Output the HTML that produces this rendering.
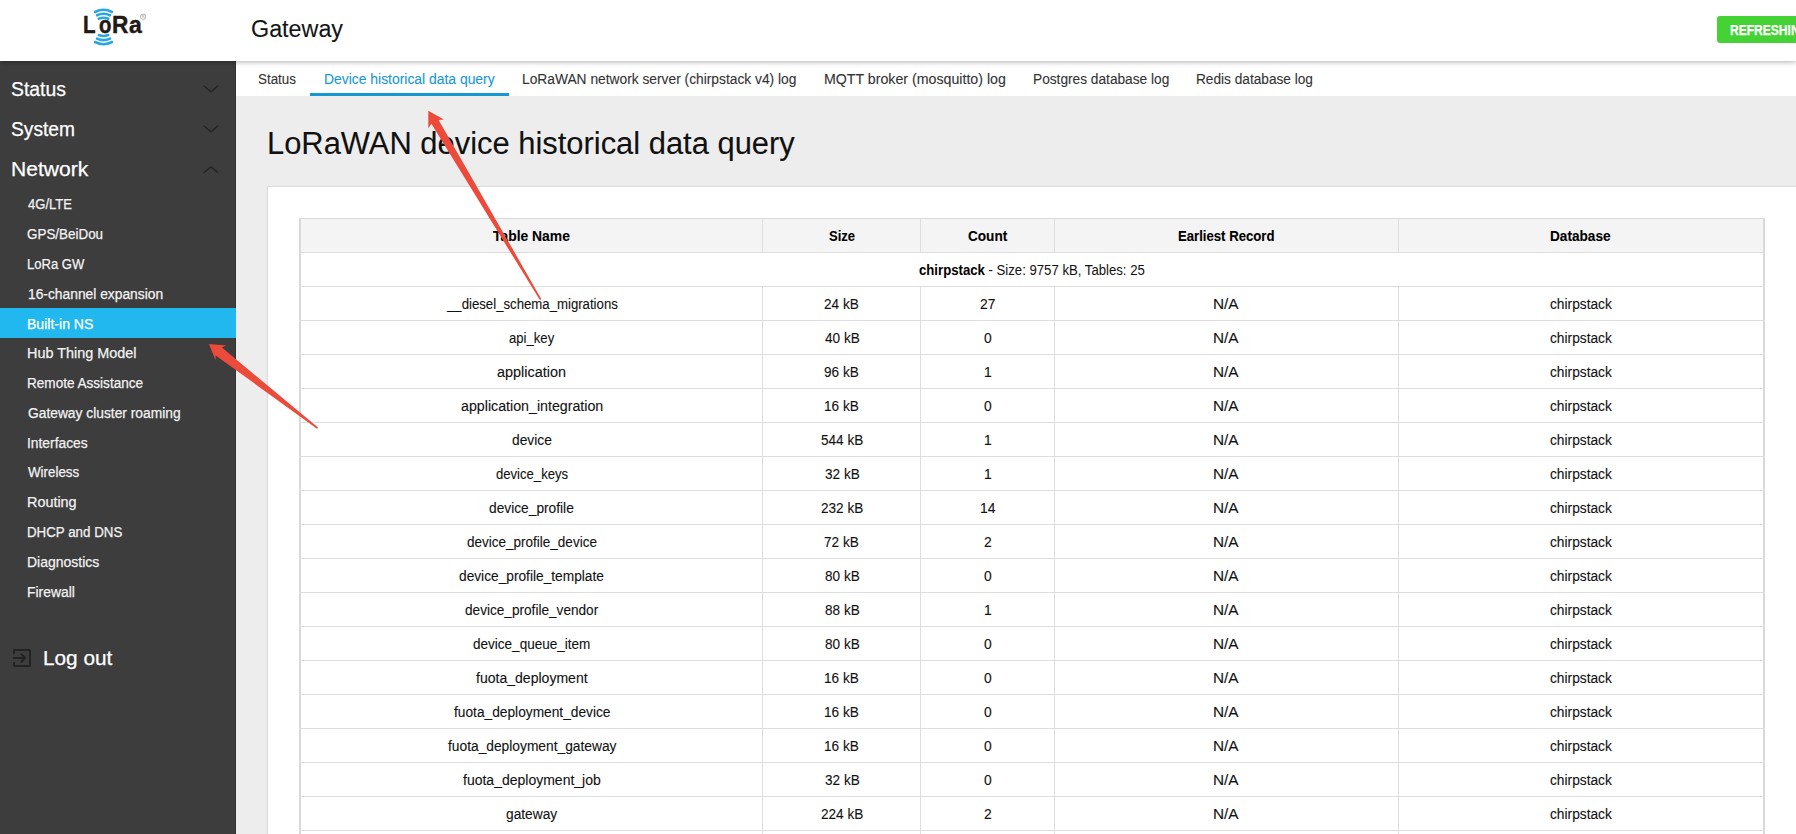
<!DOCTYPE html>
<html><head><meta charset='utf-8'><style>
*{margin:0;padding:0;box-sizing:border-box}
html,body{width:1796px;height:834px;overflow:hidden;background:#ededed;font-family:"Liberation Sans", sans-serif}
.t{position:absolute;white-space:pre;transform-origin:0 0;font-family:"Liberation Sans", sans-serif}
.s{-webkit-text-stroke:0.25px currentColor}
.s1{-webkit-text-stroke:0.1px currentColor}
.abs{position:absolute}
</style></head><body>
<div class=abs style='left:268px;top:187px;width:1600px;height:700px;background:#fff;box-shadow:0 0 1px 1px #dcdcdc'></div><div class=abs style='left:299px;top:218px;width:1466px;height:34px;background:#f4f4f4'></div><div class=abs style='left:299px;top:218px;width:2px;height:700px;background:#d9d9d9'></div><div class=abs style='left:1763px;top:218px;width:2px;height:700px;background:#d9d9d9'></div><div class=abs style='left:299px;top:218px;width:1466px;height:1px;background:#d9d9d9'></div><div class=abs style='left:299px;top:252px;width:1466px;height:1px;background:#dedede'></div><div class=abs style='left:299px;top:286px;width:1466px;height:1px;background:#dedede'></div><div class=abs style='left:299px;top:320px;width:1466px;height:1px;background:#dedede'></div><div class=abs style='left:299px;top:354px;width:1466px;height:1px;background:#dedede'></div><div class=abs style='left:299px;top:388px;width:1466px;height:1px;background:#dedede'></div><div class=abs style='left:299px;top:422px;width:1466px;height:1px;background:#dedede'></div><div class=abs style='left:299px;top:456px;width:1466px;height:1px;background:#dedede'></div><div class=abs style='left:299px;top:490px;width:1466px;height:1px;background:#dedede'></div><div class=abs style='left:299px;top:524px;width:1466px;height:1px;background:#dedede'></div><div class=abs style='left:299px;top:558px;width:1466px;height:1px;background:#dedede'></div><div class=abs style='left:299px;top:592px;width:1466px;height:1px;background:#dedede'></div><div class=abs style='left:299px;top:626px;width:1466px;height:1px;background:#dedede'></div><div class=abs style='left:299px;top:660px;width:1466px;height:1px;background:#dedede'></div><div class=abs style='left:299px;top:694px;width:1466px;height:1px;background:#dedede'></div><div class=abs style='left:299px;top:728px;width:1466px;height:1px;background:#dedede'></div><div class=abs style='left:299px;top:762px;width:1466px;height:1px;background:#dedede'></div><div class=abs style='left:299px;top:796px;width:1466px;height:1px;background:#dedede'></div><div class=abs style='left:299px;top:830px;width:1466px;height:1px;background:#dedede'></div><div class=abs style='left:762px;top:218px;width:1px;height:34px;background:#dedede'></div><div class=abs style='left:762px;top:286px;width:1px;height:600px;background:#dedede'></div><div class=abs style='left:920px;top:218px;width:1px;height:34px;background:#dedede'></div><div class=abs style='left:920px;top:286px;width:1px;height:600px;background:#dedede'></div><div class=abs style='left:1054px;top:218px;width:1px;height:34px;background:#dedede'></div><div class=abs style='left:1054px;top:286px;width:1px;height:600px;background:#dedede'></div><div class=abs style='left:1398px;top:218px;width:1px;height:34px;background:#dedede'></div><div class=abs style='left:1398px;top:286px;width:1px;height:600px;background:#dedede'></div><div class=t style='left:919.03px;top:263px;font-size:14px;line-height:14px;color:#111;transform:scaleX(0.9400)'><b style='color:#000'>chirpstack</b> - Size: 9757 kB, Tables: 25</div>
<div style='position:absolute;left:0;top:0;z-index:2'>
<div class='t s1' style='left:83.42px;top:13px;font-size:24px;line-height:24px;color:#231815;font-weight:bold;transform:scaleX(0.8560);-webkit-text-stroke:0.45px #231815;'>L</div><div class='t s1' style='left:98.55px;top:13px;font-size:24px;line-height:24px;color:#231815;font-weight:bold;transform:scaleX(0.8471);-webkit-text-stroke:0.45px #231815;'>o</div><div class='t s1' style='left:111.98px;top:13px;font-size:24px;line-height:24px;color:#231815;font-weight:bold;transform:scaleX(0.9443);-webkit-text-stroke:0.45px #231815;'>R</div><div class='t s1' style='left:128.88px;top:13px;font-size:24px;line-height:24px;color:#231815;font-weight:bold;transform:scaleX(0.9569);-webkit-text-stroke:0.45px #231815;'>a</div><div class='t s1' style='left:251.43px;top:18px;font-size:23px;line-height:23px;color:#141414;transform:scaleX(1.0140);'>Gateway</div><div class='t s' style='left:1729.90px;top:23px;font-size:14px;line-height:14px;color:#ffffff;font-weight:bold;transform:scaleX(0.86);'>REFRESHING</div><div class='t s1' style='left:257.78px;top:72px;font-size:14px;line-height:14px;color:#333333;transform:scaleX(0.9558);'>Status</div><div class='t s1' style='left:324.16px;top:72px;font-size:14px;line-height:14px;color:#1898d4;transform:scaleX(0.9924);'>Device historical data query</div><div class='t s1' style='left:522.17px;top:72px;font-size:14px;line-height:14px;color:#333333;transform:scaleX(0.9841);'>LoRaWAN network server (chirpstack v4) log</div><div class='t s1' style='left:823.73px;top:72px;font-size:14px;line-height:14px;color:#333333;transform:scaleX(1.0133);'>MQTT broker (mosquitto) log</div><div class='t s1' style='left:1033.18px;top:72px;font-size:14px;line-height:14px;color:#333333;transform:scaleX(0.9781);'>Postgres database log</div><div class='t s1' style='left:1196.18px;top:72px;font-size:14px;line-height:14px;color:#333333;transform:scaleX(0.9758);'>Redis database log</div><div class='t s1' style='left:266.91px;top:128px;font-size:31px;line-height:31px;color:#111111;transform:scaleX(0.9966);'>LoRaWAN device historical data query</div><div class='t s' style='left:11.23px;top:79px;font-size:20px;line-height:20px;color:#ffffff;transform:scaleX(0.9691);'>Status</div><div class='t s' style='left:11.34px;top:119px;font-size:20px;line-height:20px;color:#ffffff;transform:scaleX(0.9588);'>System</div><div class='t s' style='left:10.66px;top:159px;font-size:20px;line-height:20px;color:#ffffff;transform:scaleX(1.0531);'>Network</div><div class='t s' style='left:27.67px;top:197px;font-size:14px;line-height:14px;color:#f2f2f2;transform:scaleX(0.9319);'>4G/LTE</div><div class='t s' style='left:27.18px;top:227px;font-size:14px;line-height:14px;color:#f2f2f2;transform:scaleX(0.9582);'>GPS/BeiDou</div><div class='t s' style='left:27.13px;top:257px;font-size:14px;line-height:14px;color:#f2f2f2;transform:scaleX(0.9333);'>LoRa GW</div><div class='t s' style='left:27.91px;top:287px;font-size:14px;line-height:14px;color:#f2f2f2;transform:scaleX(0.9859);'>16-channel expansion</div><div class='t s' style='left:27.45px;top:317px;font-size:14px;line-height:14px;color:#ffffff;transform:scaleX(1.0039);'>Built-in NS</div><div class='t s' style='left:27.01px;top:346px;font-size:14px;line-height:14px;color:#f2f2f2;transform:scaleX(1.0283);'>Hub Thing Model</div><div class='t s' style='left:27.09px;top:376px;font-size:14px;line-height:14px;color:#f2f2f2;transform:scaleX(0.9686);'>Remote Assistance</div><div class='t s' style='left:27.56px;top:406px;font-size:14px;line-height:14px;color:#f2f2f2;transform:scaleX(0.9853);'>Gateway cluster roaming</div><div class='t s' style='left:27.37px;top:436px;font-size:14px;line-height:14px;color:#f2f2f2;transform:scaleX(0.9874);'>Interfaces</div><div class='t s' style='left:27.86px;top:465px;font-size:14px;line-height:14px;color:#f2f2f2;transform:scaleX(0.9547);'>Wireless</div><div class='t s' style='left:27.11px;top:495px;font-size:14px;line-height:14px;color:#f2f2f2;transform:scaleX(1.0283);'>Routing</div><div class='t s' style='left:27.21px;top:525px;font-size:14px;line-height:14px;color:#f2f2f2;transform:scaleX(0.9517);'>DHCP and DNS</div><div class='t s' style='left:27.15px;top:555px;font-size:14px;line-height:14px;color:#f2f2f2;transform:scaleX(0.9986);'>Diagnostics</div><div class='t s' style='left:27.16px;top:585px;font-size:14px;line-height:14px;color:#f2f2f2;transform:scaleX(0.9913);'>Firewall</div><div class='t s' style='left:42.68px;top:648px;font-size:20px;line-height:20px;color:#ffffff;transform:scaleX(1.0394);'>Log out</div><div class='t s1' style='left:493.45px;top:229px;font-size:14px;line-height:14px;color:#000000;font-weight:bold;transform:scaleX(0.9915);'>Table Name</div><div class='t s1' style='left:828.94px;top:229px;font-size:14px;line-height:14px;color:#000000;font-weight:bold;transform:scaleX(0.9296);'>Size</div><div class='t s1' style='left:968.21px;top:229px;font-size:14px;line-height:14px;color:#000000;font-weight:bold;transform:scaleX(0.9711);'>Count</div><div class='t s1' style='left:1178.46px;top:229px;font-size:14px;line-height:14px;color:#000000;font-weight:bold;transform:scaleX(0.9390);'>Earliest Record</div><div class='t s1' style='left:1550.43px;top:229px;font-size:14px;line-height:14px;color:#000000;font-weight:bold;transform:scaleX(0.9728);'>Database</div><div class='t s1' style='left:446.74px;top:297px;font-size:14px;line-height:14px;color:#111111;transform:scaleX(0.9420);'>__diesel_schema_migrations</div><div class='t s1' style='left:824.41px;top:297px;font-size:14px;line-height:14px;color:#111111;transform:scaleX(0.9700);'>24 kB</div><div class='t s1' style='left:980.20px;top:297px;font-size:14px;line-height:14px;color:#111111;transform:scaleX(0.9900);'>27</div><div class='t s1' style='left:1213.33px;top:297px;font-size:14px;line-height:14px;color:#111111;transform:scaleX(1.0955);'>N/A</div><div class='t s1' style='left:1549.81px;top:297px;font-size:14px;line-height:14px;color:#111111;transform:scaleX(0.9808);'>chirpstack</div><div class='t s1' style='left:509.03px;top:331px;font-size:14px;line-height:14px;color:#111111;transform:scaleX(0.9368);'>api_key</div><div class='t s1' style='left:824.65px;top:331px;font-size:14px;line-height:14px;color:#111111;transform:scaleX(0.9700);'>40 kB</div><div class='t s1' style='left:984.16px;top:331px;font-size:14px;line-height:14px;color:#111111;transform:scaleX(0.9900);'>0</div><div class='t s1' style='left:1213.33px;top:331px;font-size:14px;line-height:14px;color:#111111;transform:scaleX(1.0955);'>N/A</div><div class='t s1' style='left:1549.81px;top:331px;font-size:14px;line-height:14px;color:#111111;transform:scaleX(0.9808);'>chirpstack</div><div class='t s1' style='left:497.48px;top:365px;font-size:14px;line-height:14px;color:#111111;transform:scaleX(1.0305);'>application</div><div class='t s1' style='left:824.41px;top:365px;font-size:14px;line-height:14px;color:#111111;transform:scaleX(0.9700);'>96 kB</div><div class='t s1' style='left:984.04px;top:365px;font-size:14px;line-height:14px;color:#111111;transform:scaleX(0.9900);'>1</div><div class='t s1' style='left:1213.33px;top:365px;font-size:14px;line-height:14px;color:#111111;transform:scaleX(1.0955);'>N/A</div><div class='t s1' style='left:1549.81px;top:365px;font-size:14px;line-height:14px;color:#111111;transform:scaleX(0.9808);'>chirpstack</div><div class='t s1' style='left:460.79px;top:399px;font-size:14px;line-height:14px;color:#111111;transform:scaleX(1.0155);'>application_integration</div><div class='t s1' style='left:824.29px;top:399px;font-size:14px;line-height:14px;color:#111111;transform:scaleX(0.9700);'>16 kB</div><div class='t s1' style='left:984.16px;top:399px;font-size:14px;line-height:14px;color:#111111;transform:scaleX(0.9900);'>0</div><div class='t s1' style='left:1213.33px;top:399px;font-size:14px;line-height:14px;color:#111111;transform:scaleX(1.0955);'>N/A</div><div class='t s1' style='left:1549.81px;top:399px;font-size:14px;line-height:14px;color:#111111;transform:scaleX(0.9808);'>chirpstack</div><div class='t s1' style='left:511.91px;top:433px;font-size:14px;line-height:14px;color:#111111;transform:scaleX(0.9860);'>device</div><div class='t s1' style='left:820.65px;top:433px;font-size:14px;line-height:14px;color:#111111;transform:scaleX(0.9700);'>544 kB</div><div class='t s1' style='left:984.04px;top:433px;font-size:14px;line-height:14px;color:#111111;transform:scaleX(0.9900);'>1</div><div class='t s1' style='left:1213.33px;top:433px;font-size:14px;line-height:14px;color:#111111;transform:scaleX(1.0955);'>N/A</div><div class='t s1' style='left:1549.81px;top:433px;font-size:14px;line-height:14px;color:#111111;transform:scaleX(0.9808);'>chirpstack</div><div class='t s1' style='left:495.73px;top:467px;font-size:14px;line-height:14px;color:#111111;transform:scaleX(0.9355);'>device_keys</div><div class='t s1' style='left:824.53px;top:467px;font-size:14px;line-height:14px;color:#111111;transform:scaleX(0.9700);'>32 kB</div><div class='t s1' style='left:984.04px;top:467px;font-size:14px;line-height:14px;color:#111111;transform:scaleX(0.9900);'>1</div><div class='t s1' style='left:1213.33px;top:467px;font-size:14px;line-height:14px;color:#111111;transform:scaleX(1.0955);'>N/A</div><div class='t s1' style='left:1549.81px;top:467px;font-size:14px;line-height:14px;color:#111111;transform:scaleX(0.9808);'>chirpstack</div><div class='t s1' style='left:489.41px;top:501px;font-size:14px;line-height:14px;color:#111111;transform:scaleX(0.9818);'>device_profile</div><div class='t s1' style='left:820.65px;top:501px;font-size:14px;line-height:14px;color:#111111;transform:scaleX(0.9700);'>232 kB</div><div class='t s1' style='left:979.96px;top:501px;font-size:14px;line-height:14px;color:#111111;transform:scaleX(0.9900);'>14</div><div class='t s1' style='left:1213.33px;top:501px;font-size:14px;line-height:14px;color:#111111;transform:scaleX(1.0955);'>N/A</div><div class='t s1' style='left:1549.81px;top:501px;font-size:14px;line-height:14px;color:#111111;transform:scaleX(0.9808);'>chirpstack</div><div class='t s1' style='left:466.87px;top:535px;font-size:14px;line-height:14px;color:#111111;transform:scaleX(0.9648);'>device_profile_device</div><div class='t s1' style='left:824.41px;top:535px;font-size:14px;line-height:14px;color:#111111;transform:scaleX(0.9700);'>72 kB</div><div class='t s1' style='left:984.16px;top:535px;font-size:14px;line-height:14px;color:#111111;transform:scaleX(0.9900);'>2</div><div class='t s1' style='left:1213.33px;top:535px;font-size:14px;line-height:14px;color:#111111;transform:scaleX(1.0955);'>N/A</div><div class='t s1' style='left:1549.81px;top:535px;font-size:14px;line-height:14px;color:#111111;transform:scaleX(0.9808);'>chirpstack</div><div class='t s1' style='left:459.36px;top:569px;font-size:14px;line-height:14px;color:#111111;transform:scaleX(0.9799);'>device_profile_template</div><div class='t s1' style='left:824.53px;top:569px;font-size:14px;line-height:14px;color:#111111;transform:scaleX(0.9700);'>80 kB</div><div class='t s1' style='left:984.16px;top:569px;font-size:14px;line-height:14px;color:#111111;transform:scaleX(0.9900);'>0</div><div class='t s1' style='left:1213.33px;top:569px;font-size:14px;line-height:14px;color:#111111;transform:scaleX(1.0955);'>N/A</div><div class='t s1' style='left:1549.81px;top:569px;font-size:14px;line-height:14px;color:#111111;transform:scaleX(0.9808);'>chirpstack</div><div class='t s1' style='left:465.01px;top:603px;font-size:14px;line-height:14px;color:#111111;transform:scaleX(0.9725);'>device_profile_vendor</div><div class='t s1' style='left:824.53px;top:603px;font-size:14px;line-height:14px;color:#111111;transform:scaleX(0.9700);'>88 kB</div><div class='t s1' style='left:984.04px;top:603px;font-size:14px;line-height:14px;color:#111111;transform:scaleX(0.9900);'>1</div><div class='t s1' style='left:1213.33px;top:603px;font-size:14px;line-height:14px;color:#111111;transform:scaleX(1.0955);'>N/A</div><div class='t s1' style='left:1549.81px;top:603px;font-size:14px;line-height:14px;color:#111111;transform:scaleX(0.9808);'>chirpstack</div><div class='t s1' style='left:473.27px;top:637px;font-size:14px;line-height:14px;color:#111111;transform:scaleX(0.9667);'>device_queue_item</div><div class='t s1' style='left:824.53px;top:637px;font-size:14px;line-height:14px;color:#111111;transform:scaleX(0.9700);'>80 kB</div><div class='t s1' style='left:984.16px;top:637px;font-size:14px;line-height:14px;color:#111111;transform:scaleX(0.9900);'>0</div><div class='t s1' style='left:1213.33px;top:637px;font-size:14px;line-height:14px;color:#111111;transform:scaleX(1.0955);'>N/A</div><div class='t s1' style='left:1549.81px;top:637px;font-size:14px;line-height:14px;color:#111111;transform:scaleX(0.9808);'>chirpstack</div><div class='t s1' style='left:475.85px;top:671px;font-size:14px;line-height:14px;color:#111111;transform:scaleX(1.0027);'>fuota_deployment</div><div class='t s1' style='left:824.29px;top:671px;font-size:14px;line-height:14px;color:#111111;transform:scaleX(0.9700);'>16 kB</div><div class='t s1' style='left:984.16px;top:671px;font-size:14px;line-height:14px;color:#111111;transform:scaleX(0.9900);'>0</div><div class='t s1' style='left:1213.33px;top:671px;font-size:14px;line-height:14px;color:#111111;transform:scaleX(1.0955);'>N/A</div><div class='t s1' style='left:1549.81px;top:671px;font-size:14px;line-height:14px;color:#111111;transform:scaleX(0.9808);'>chirpstack</div><div class='t s1' style='left:453.65px;top:705px;font-size:14px;line-height:14px;color:#111111;transform:scaleX(0.9808);'>fuota_deployment_device</div><div class='t s1' style='left:824.29px;top:705px;font-size:14px;line-height:14px;color:#111111;transform:scaleX(0.9700);'>16 kB</div><div class='t s1' style='left:984.16px;top:705px;font-size:14px;line-height:14px;color:#111111;transform:scaleX(0.9900);'>0</div><div class='t s1' style='left:1213.33px;top:705px;font-size:14px;line-height:14px;color:#111111;transform:scaleX(1.0955);'>N/A</div><div class='t s1' style='left:1549.81px;top:705px;font-size:14px;line-height:14px;color:#111111;transform:scaleX(0.9808);'>chirpstack</div><div class='t s1' style='left:447.50px;top:739px;font-size:14px;line-height:14px;color:#111111;transform:scaleX(0.9839);'>fuota_deployment_gateway</div><div class='t s1' style='left:824.29px;top:739px;font-size:14px;line-height:14px;color:#111111;transform:scaleX(0.9700);'>16 kB</div><div class='t s1' style='left:984.16px;top:739px;font-size:14px;line-height:14px;color:#111111;transform:scaleX(0.9900);'>0</div><div class='t s1' style='left:1213.33px;top:739px;font-size:14px;line-height:14px;color:#111111;transform:scaleX(1.0955);'>N/A</div><div class='t s1' style='left:1549.81px;top:739px;font-size:14px;line-height:14px;color:#111111;transform:scaleX(0.9808);'>chirpstack</div><div class='t s1' style='left:463.00px;top:773px;font-size:14px;line-height:14px;color:#111111;'>fuota_deployment_job</div><div class='t s1' style='left:824.53px;top:773px;font-size:14px;line-height:14px;color:#111111;transform:scaleX(0.9700);'>32 kB</div><div class='t s1' style='left:984.16px;top:773px;font-size:14px;line-height:14px;color:#111111;transform:scaleX(0.9900);'>0</div><div class='t s1' style='left:1213.33px;top:773px;font-size:14px;line-height:14px;color:#111111;transform:scaleX(1.0955);'>N/A</div><div class='t s1' style='left:1549.81px;top:773px;font-size:14px;line-height:14px;color:#111111;transform:scaleX(0.9808);'>chirpstack</div><div class='t s1' style='left:505.96px;top:807px;font-size:14px;line-height:14px;color:#111111;transform:scaleX(0.9825);'>gateway</div><div class='t s1' style='left:820.65px;top:807px;font-size:14px;line-height:14px;color:#111111;transform:scaleX(0.9700);'>224 kB</div><div class='t s1' style='left:984.16px;top:807px;font-size:14px;line-height:14px;color:#111111;transform:scaleX(0.9900);'>2</div><div class='t s1' style='left:1213.33px;top:807px;font-size:14px;line-height:14px;color:#111111;transform:scaleX(1.0955);'>N/A</div><div class='t s1' style='left:1549.81px;top:807px;font-size:14px;line-height:14px;color:#111111;transform:scaleX(0.9808);'>chirpstack</div>
</div>
<div class=abs style='left:0;top:0;width:1796px;height:61px;background:#fff;z-index:1;box-shadow:0 1px 5px rgba(0,0,0,0.32)'></div><div class=abs style='left:236px;top:61px;width:1560px;height:35px;background:#fff'></div><div class=abs style='left:310px;top:93px;width:199px;height:3px;background:#1598cd'></div><div class=abs style='left:0;top:61px;width:236px;height:773px;background:#3d3d3d;border-right:1px solid #333'></div><div class=abs style='left:0;top:308px;width:236px;height:30px;background:#21b8f0'></div><svg class=abs style='left:203.4px;top:85px' width='15.8' height='7.6' viewBox='0 0 15.8 7.6'><path d='M0.8 0.8 L7.9 6.8 L15 0.8' fill='none' stroke='#222' stroke-width='1.35'/></svg><svg class=abs style='left:203.4px;top:125.2px' width='15.8' height='7.6' viewBox='0 0 15.8 7.6'><path d='M0.8 0.8 L7.9 6.8 L15 0.8' fill='none' stroke='#222' stroke-width='1.35'/></svg><svg class=abs style='left:203.4px;top:165.8px' width='15.8' height='7.6' viewBox='0 0 15.8 7.6'><path d='M0.8 6.8 L7.9 0.8 L15 6.8' fill='none' stroke='#222' stroke-width='1.35'/></svg><svg class=abs style='left:12px;top:648px' width='20' height='20' viewBox='0 0 20 20'><path d='M2 6 V2.5 Q2 2 2.5 2 H17.5 Q18 2 18 2.5 V17.5 Q18 18 17.5 18 H2.5 Q2 18 2 17.5 V14' fill='none' stroke='#222' stroke-width='2'/><path d='M1 10 H13' stroke='#222' stroke-width='2'/><path d='M8.8 5.6 L13.2 10 L8.8 14.4' fill='none' stroke='#222' stroke-width='2'/></svg><svg class=abs style='left:80px;top:4px;z-index:4' width='70' height='46' viewBox='80 4 70 46'>
<g fill='none' stroke='#2aa6e0' stroke-width='2.6' stroke-linecap='round'>
<path d='M95 12 Q103.5 7.6 112 12'/>
<path d='M97 15.3 Q103.5 12.3 110 15.3'/>
<path d='M98.8 18.7 Q103.5 16.8 108.2 18.7'/>
<path d='M98.8 35 Q103.5 36.9 108.2 35'/>
<path d='M97 38.6 Q103.5 41.6 110 38.6'/>
<path d='M95 42 Q103.5 46.5 112 42'/>
</g>
<circle cx='143.1' cy='16.8' r='2.7' fill='none' stroke='#888' stroke-width='0.6'/><text x='143.1' y='18.3' font-size='4' text-anchor='middle' fill='#888' font-family='Liberation Sans'>R</text>
</svg><div class=abs style='left:1717px;top:16px;width:120px;height:27px;background:#44d234;border-radius:3px;z-index:1'></div><svg class=abs style='left:0;top:0;z-index:10' width='1796' height='834' viewBox='0 0 1796 834'>
<g fill='#ec4a3b'>
<polygon points='428.3,110.7 443.9,119.6 438.6,119.9 541.4,299.2 539.9,300.1 431.4,123.8 428.3,128.3'/>
<polygon points='208.9,343.9 226.3,345.5 221.9,347.6 318.1,427.6 317.0,428.8 215.7,355.4 215.5,360.1'/>
</g></svg>
</body></html>
